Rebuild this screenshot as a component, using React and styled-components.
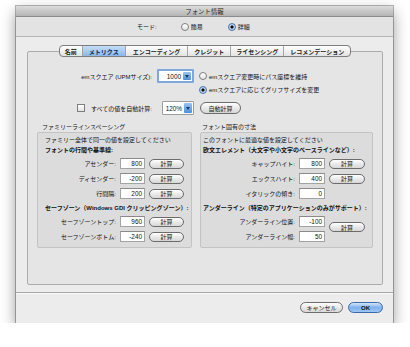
import React from 'react';
import styled, { createGlobalStyle } from 'styled-components';

const Global = createGlobalStyle`
  * { box-sizing: border-box; }
  body {
    margin: 0;
    background: #ffffff;
    font-family: "Liberation Sans", "Noto Sans CJK JP", sans-serif;
    font-size: 6px;
    color: #111;
  }
`;

const Window = styled.div`
  width: 377px;
  height: 317px;
  margin: 6px 0 0 16px;
  display: flex;
  flex-direction: column;
  background: #ececec;
  box-shadow: 0 0 0 1px rgba(0, 0, 0, 0.28), 0 6px 14px rgba(0, 0, 0, 0.42);
`;

const TitleBar = styled.div`
  height: 11px;
  display: flex;
  align-items: center;
  justify-content: center;
  font-size: 6.4px;
  color: #1e1e1e;
  background: linear-gradient(#dcdcdc, #b4b4b4);
  border-bottom: 1px solid #8c8c8c;
`;

const ModeBar = styled.div`
  height: 20px;
  display: flex;
  align-items: center;
  padding-left: 121px;
  background: #e3e3e3;
  border-bottom: 1px solid #b6b6b6;
`;

const ModeLabel = styled.span`
  margin-right: 24px;
`;

const RadioOption = styled.label`
  display: flex;
  align-items: center;
  gap: 2px;
  margin-right: ${p => p.$gap || 0}px;
`;

const Radio = styled.span`
  width: 8px;
  height: 8px;
  flex: none;
  border-radius: 50%;
  border: 1px solid ${p => (p.$on ? '#4f74a8' : '#7e7e7e')};
  background: ${p => (p.$on
    ? 'radial-gradient(circle, #111 0 1.4px, #cfe2fa 1.8px, #86b2e8 100%)'
    : 'linear-gradient(#ffffff, #e4e4e4)')};
`;

const Body = styled.div`
  flex: 1;
  display: flex;
  flex-direction: column;
  padding: 8px 10px 7px 11px;
`;

const TabStrip = styled.div`
  align-self: center;
  display: flex;
  height: 12px;
  border: 1px solid #7d7d7d;
  border-radius: 4px;
  overflow: hidden;
  position: relative;
  z-index: 1;
  background: linear-gradient(#ffffff, #e2e2e2);
`;

const Tab = styled.div`
  display: flex;
  align-items: center;
  padding: 0 ${p => p.$pad}px;
  font-weight: bold;
  color: ${p => (p.$active ? '#0c2a55' : '#222')};
  border-left: ${p => (p.$first ? 'none' : '1px solid #a4a4a4')};
  background: ${p => (p.$active ? 'linear-gradient(#c5ddf8, #8ab7ec)' : 'transparent')};
`;

const TabBox = styled.div`
  flex: 1;
  margin-top: -6px;
  border: 1px solid #ababab;
  border-radius: 2px;
  background: #e5e5e5;
  padding: 17px 8px 0 9px;
`;

const TopGrid = styled.div`
  display: grid;
  grid-template-columns: 115px 37px auto;
  grid-template-rows: 14px 13px 19px;
  column-gap: 5px;
  align-items: center;
`;

const FieldLabel = styled.span`
  justify-self: end;
  display: flex;
  align-items: center;
  gap: 3px;
  white-space: nowrap;
  grid-row: ${p => p.$row};
  grid-column: 1;
  align-self: ${p => p.$align || 'center'};
  height: 14px;
`;

const Check = styled.span`
  width: 8px;
  height: 8px;
  border: 1px solid #7e7e7e;
  background: linear-gradient(#ffffff, #e2e2e2);
  margin-right: 3px;
`;

const Popup = styled.div`
  grid-row: ${p => p.$row};
  grid-column: 2;
  justify-self: end;
  align-self: ${p => p.$align || 'center'};
  width: ${p => p.$w}px;
  height: 14px;
  display: flex;
  align-items: center;
  padding: 1px;
  border: ${p => (p.$focus ? '2px solid #7ea7db' : '1px solid #9c9c9c')};
  border-radius: 1px;
  background: #fff;
`;

const PopupValue = styled.span`
  flex: 1;
  text-align: right;
  padding-right: 2px;
  font-size: 6.4px;
`;

const PopupArrow = styled.span`
  width: 8px;
  height: 100%;
  display: flex;
  align-items: center;
  justify-content: center;
  background: linear-gradient(#9cc3f0, #4f8ddc);
  border-radius: 1px;
  &::after {
    content: '';
    border-left: 2px solid transparent;
    border-right: 2px solid transparent;
    border-top: 3px solid #123a6e;
  }
`;

const RightCell = styled.div`
  grid-column: 3;
  grid-row: ${p => p.$row};
  align-self: ${p => p.$align || 'center'};
  display: flex;
  align-items: center;
  gap: 2px;
  white-space: nowrap;
`;

const PillButton = styled.div`
  width: ${p => p.$w}px;
  height: ${p => p.$h || 10}px;
  display: flex;
  align-items: center;
  justify-content: center;
  border: 1px solid #6c6c6c;
  border-radius: 6px;
  background: ${p => (p.$primary
    ? 'linear-gradient(#d3e6fb, #7fb1ec 50%, #9cc6f4)'
    : 'linear-gradient(#ffffff, #e9e9e9 50%, #d8d8d8)')};
  border-color: ${p => (p.$primary ? '#3c69a8' : '#6c6c6c')};
  color: #111;
  font-weight: ${p => (p.$primary ? 'bold' : 'normal')};
`;

const AutoButton = styled(PillButton)`
  margin: 0 0 1px 1px;
`;

const Columns = styled.div`
  display: grid;
  grid-template-columns: 155px 173px;
  column-gap: 8px;
`;

const SectionTitle = styled.div`
  height: 11px;
  margin-top: 6px;
  padding-left: ${p => p.$pad}px;
  display: flex;
  align-items: center;
`;

const Group = styled.div`
  height: 116px;
  border: 1px solid #c3c3c3;
  border-radius: 2px;
  background: #dcdcdc;
  padding: 1px 7px 0 ${p => p.$pad}px;
`;

const Line = styled.div`
  height: 10px;
  display: flex;
  align-items: center;
  font-weight: ${p => (p.$bold ? 'bold' : 'normal')};
  margin-top: ${p => p.$mt || 0}px;
  white-space: nowrap;
`;

const Rows = styled.div`
  display: grid;
  grid-template-columns: 1fr ${p => p.$field}px ${p => p.$btn}px;
  grid-auto-rows: 15px;
  column-gap: 4px;
  align-items: center;
  margin-top: 2px;
`;

const RowLabel = styled.span`
  justify-self: end;
  white-space: nowrap;
`;

const Field = styled.div`
  height: 11px;
  display: flex;
  align-items: center;
  justify-content: flex-end;
  padding-right: 2px;
  background: #fff;
  border: 1px solid #a3a3a3;
  border-top-color: #8a8a8a;
  font-size: 6.4px;
`;

const SpanButton = styled(PillButton)`
  grid-column: 3;
  grid-row: span 2;
  align-self: start;
  margin-top: 8px;
`;

const Footer = styled.div`
  height: 31px;
  display: flex;
  justify-content: flex-end;
  gap: 5px;
  padding: 9px 10px 0 0;
  border-top: 1px solid #a8a8a8;
  box-shadow: inset 0 1px 0 #fafafa;
  background: #ececec;
`;

const tabs = [
  ['名前', 5],
  ['メトリクス', 6],
  ['エンコーディング', 7],
  ['クレジット', 6],
  ['ライセンシング', 5],
  ['レコメンデーション', 6],
];

const familyRows = [
  ['アセンダー:', '800'],
  ['ディセンダー:', '-200'],
  ['行間隔:', '200'],
];

const safeRows = [
  ['セーフゾーントップ:', '960'],
  ['セーフゾーンボトム:', '-240'],
];

const App = () => (
  <>
    <Global />
    <Window>
      <TitleBar>フォント情報</TitleBar>
      <ModeBar>
        <ModeLabel>モード:</ModeLabel>
        <RadioOption $gap={25}><Radio />簡易</RadioOption>
        <RadioOption><Radio $on />詳細</RadioOption>
      </ModeBar>
      <Body>
        <TabStrip>
          {tabs.map(([t, pad], i) => (
            <Tab key={t} $pad={pad} $first={i === 0} $active={i === 1}>{t}</Tab>
          ))}
        </TabStrip>
        <TabBox>
          <TopGrid>
            <FieldLabel $row={1}>emスクエア (UPMサイズ):</FieldLabel>
            <Popup $row={1} $w={37} $focus>
              <PopupValue>1000</PopupValue>
              <PopupArrow />
            </Popup>
            <RightCell $row={1}><Radio />emスクエア変更時にパス座標を維持</RightCell>
            <RightCell $row={2}><Radio $on />emスクエアに応じてグリフサイズを変更</RightCell>
            <FieldLabel $row={3} $align="end"><Check />すべての値を自動計算:</FieldLabel>
            <Popup $row={3} $w={32} $align="end">
              <PopupValue>120%</PopupValue>
              <PopupArrow />
            </Popup>
            <RightCell $row={3} $align="end">
              <AutoButton $w={41} $h={12}>自動計算</AutoButton>
            </RightCell>
          </TopGrid>

          <Columns>
            <SectionTitle $pad={5}>ファミリーラインスペーシング</SectionTitle>
            <SectionTitle $pad={2}>フォント固有の寸法</SectionTitle>

            <Group $pad={7}>
              <Line>ファミリー全体で同一の値を設定してください</Line>
              <Line $bold>フォントの行間や基準線:</Line>
              <Rows $field={25} $btn={35}>
                {familyRows.map(([l, v]) => (
                  <React.Fragment key={l}>
                    <RowLabel>{l}</RowLabel>
                    <Field>{v}</Field>
                    <PillButton $w={35}>計算</PillButton>
                  </React.Fragment>
                ))}
              </Rows>
              <Line $bold $mt={1}>セーフゾーン（Windows GDI クリッピングゾーン）:</Line>
              <Rows $field={25} $btn={35}>
                {safeRows.map(([l, v]) => (
                  <React.Fragment key={l}>
                    <RowLabel>{l}</RowLabel>
                    <Field>{v}</Field>
                    <PillButton $w={35}>計算</PillButton>
                  </React.Fragment>
                ))}
              </Rows>
            </Group>

            <Group $pad={2}>
              <Line>このフォントに最適な値を設定してください</Line>
              <Line $bold>欧文エレメント（大文字や小文字のベースラインなど）:</Line>
              <Rows $field={26} $btn={36}>
                <RowLabel>キャップハイト:</RowLabel>
                <Field>800</Field>
                <PillButton $w={36}>計算</PillButton>
                <RowLabel>エックスハイト:</RowLabel>
                <Field>400</Field>
                <PillButton $w={36}>計算</PillButton>
                <RowLabel>イタリックの傾き:</RowLabel>
                <Field>0</Field>
                <span />
              </Rows>
              <Line $bold $mt={1}>アンダーライン（特定のアプリケーションのみがサポート）:</Line>
              <Rows $field={26} $btn={36}>
                <RowLabel>アンダーライン位置:</RowLabel>
                <Field>-100</Field>
                <SpanButton $w={36}>計算</SpanButton>
                <RowLabel>アンダーライン幅:</RowLabel>
                <Field>50</Field>
              </Rows>
            </Group>
          </Columns>
        </TabBox>
      </Body>
      <Footer>
        <PillButton $w={43} $h={11}>キャンセル</PillButton>
        <PillButton $w={35} $h={11} $primary>OK</PillButton>
      </Footer>
    </Window>
  </>
);

export default App;
